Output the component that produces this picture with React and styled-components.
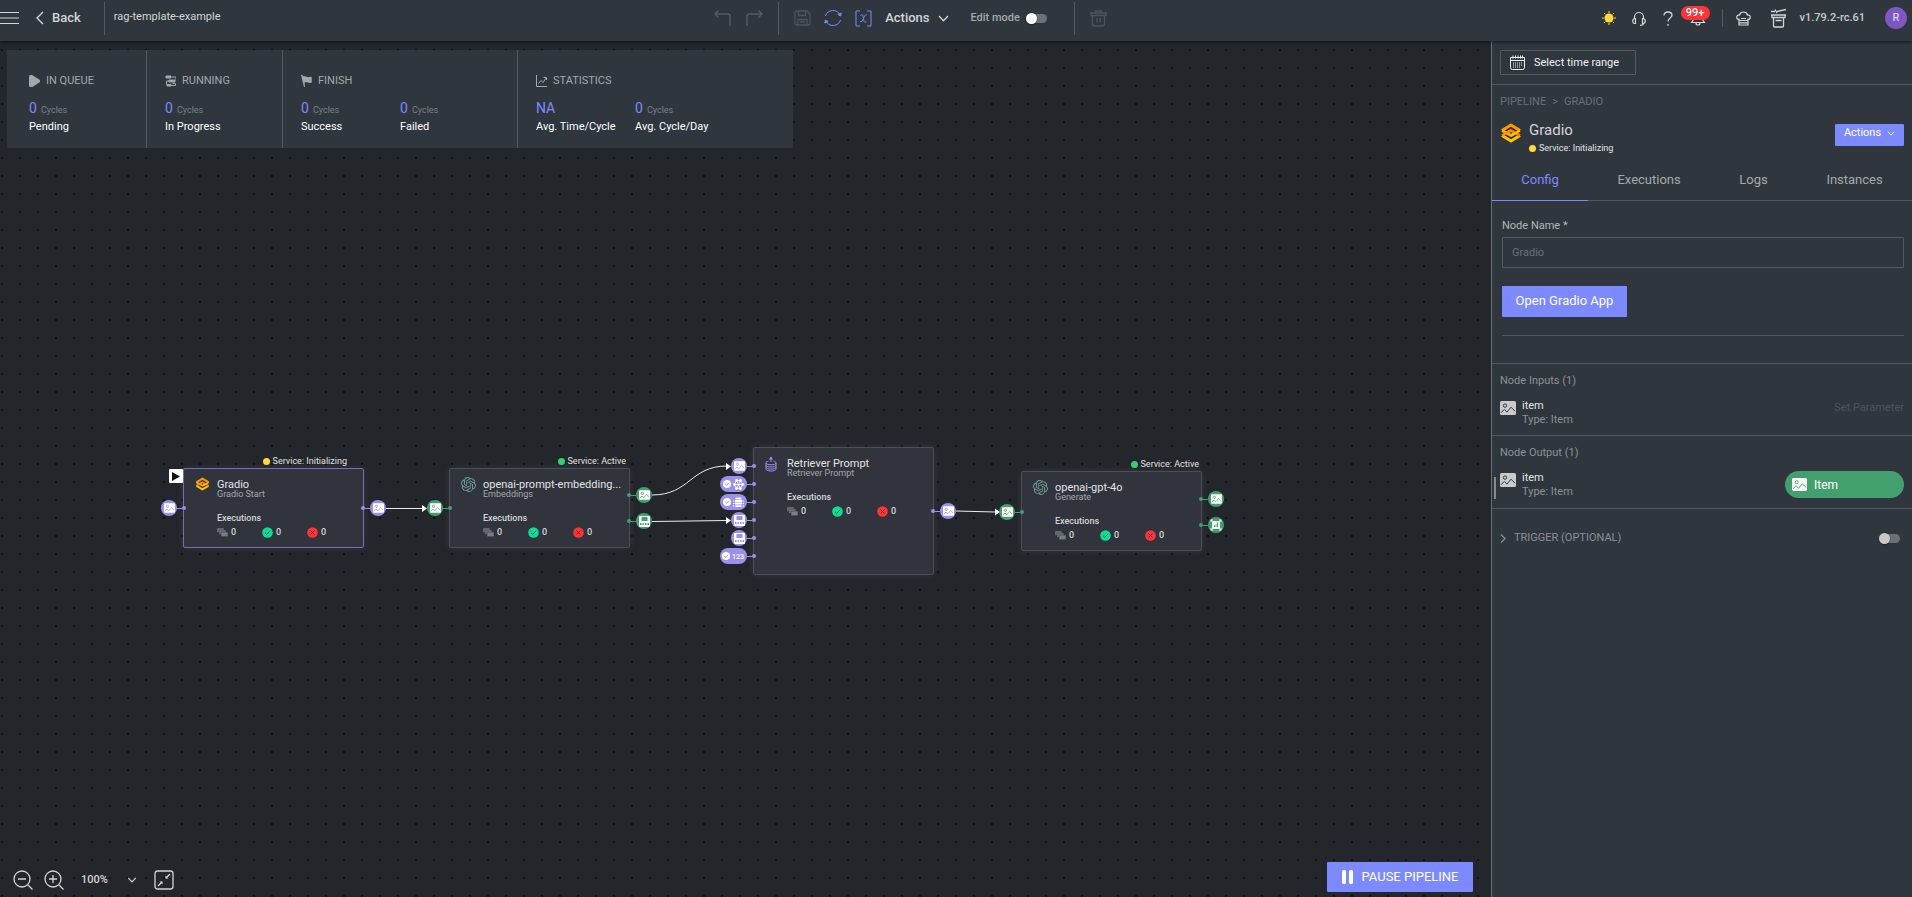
import React from "react";
import styled, { createGlobalStyle, css } from "styled-components";
import { SiOpenai } from "react-icons/si";

const c = {
  bar: "#30363e",
  canvas: "#23262b",
  line: "#555a62",
  text: "#d3d5d7",
  soft: "#a5a8ab",
  mute: "#8c9095",
  dim: "#6b7076",
  off: "#4e545c",
  accent: "#7d8aff",
  purple: "#9d8fec",
  green: "#43a06e",
};

const GlobalStyle = createGlobalStyle`
  * { box-sizing: border-box; }
  body {
    margin: 0;
    background: ${c.canvas};
    color: ${c.text};
    font-family: Roboto, "Liberation Sans", sans-serif;
    font-size: 11px;
    line-height: 14px;
  }
  h1, h2, h3, h4, p, dl, dd, dt, ul { margin: 0; padding: 0; font: inherit; list-style: none; }
  button, input, select { font: inherit; color: inherit; }
  svg { display: block; flex: none; }
`;

const Page = styled.div`
  display: flex;
  flex-direction: column;
  height: 100vh;
  overflow: hidden;
`;

/* ---------- header ---------- */
const Header = styled.header`
  position: relative;
  z-index: 2;
  display: flex;
  justify-content: space-between;
  flex: none;
  height: 41px;
  padding: 0 5px 5px 0;
  background: ${c.bar};
  box-shadow: 0 1px 3px rgba(0, 0, 0, 0.6);
`;

const Group = styled.div`
  display: flex;
  align-items: center;
  gap: ${(p) => p.$gap || 0}px;
  padding-left: ${(p) => p.$pad || 0}px;
`;

const Plain = styled.button`
  display: flex;
  align-items: center;
  gap: 8px;
  padding: 0;
  border: 0;
  background: none;
  color: ${(p) => p.$color || c.text};
  font-size: ${(p) => p.$size || 11}px;
  font-weight: ${(p) => (p.$light ? 400 : 500)};
  cursor: pointer;
`;

const VLine = styled.span`
  width: 1px;
  height: ${(p) => p.$h || 33}px;
  background: ${c.line};
`;

const PipelineName = styled.h1`
  font-size: 11px;
  font-weight: 400;
  padding-bottom: 2px;
`;

const SwitchLabel = styled.label`
  display: flex;
  align-items: center;
  gap: 6px;
  color: ${c.soft};
  font-weight: 500;
`;

const Switch = styled.input`
  appearance: none;
  display: flex;
  align-items: center;
  width: 20px;
  height: 9px;
  margin: 0 1px;
  border-radius: 5px;
  background: #6d7074;
  &::before {
    content: "";
    width: 11px;
    height: 11px;
    margin-left: -1px;
    flex: none;
    border-radius: 50%;
    background: ${(p) => p.$knob || "#fff"};
    box-shadow: 0 1px 2px rgba(0, 0, 0, 0.4);
  }
`;

const BellBox = styled.button`
  position: relative;
  padding: 0;
  border: 0;
  background: none;
  color: ${c.text};
`;

const Badge = styled.span`
  position: absolute;
  left: -9px;
  top: -4px;
  width: 29px;
  height: 14px;
  border-radius: 7px;
  background: #fb3437;
  color: #fff;
  font-weight: 500;
  line-height: 14px;
  text-align: center;
`;

const Version = styled.span`
  padding-bottom: 1px;
  font-weight: 500;
  color: #c9cbce;
`;

const Avatar = styled.button`
  width: 22px;
  height: 22px;
  padding: 0;
  border: 0;
  border-radius: 50%;
  background: #7e57c2;
  color: #d8cdec;
  font-weight: 500;
`;

/* ---------- workspace ---------- */
const Body = styled.div`
  display: flex;
  flex: 1;
  min-height: 0;
`;

const Canvas = styled.main`
  position: relative;
  display: flex;
  flex-direction: column;
  align-items: flex-start;
  flex: 1;
  min-width: 0;
  padding: 9px 7px 5px;
  background-color: ${c.canvas};
  background-image: conic-gradient(from 90deg at 16px 16px, #0f1113 90deg, transparent 0);
  background-size: 18px 18px;
  background-position: 3px 10px;
`;

const Stats = styled.section`
  display: flex;
  width: 786px;
  max-width: 100%;
  padding-left: 4px;
  background: ${c.bar};
`;

const StatBlock = styled.div`
  padding: 24px 18px 12px;
  & + & { border-left: 1px solid ${c.line}; }
`;

const StatTitle = styled.h2`
  display: flex;
  align-items: center;
  gap: 6px;
  color: ${c.soft};
  font-size: 11px;
`;

const StatList = styled.dl`
  display: flex;
  margin-top: 12px;
`;

const Stat = styled.div`
  display: flex;
  flex-direction: column-reverse;
  gap: 2px;
  width: 99px;
  dt { color: #fff; line-height: 18px; white-space: nowrap; }
  dd { height: 16px; color: ${c.accent}; font-size: 14px; line-height: 16px; }
  small { margin-left: 4px; color: #7b8085; font-size: 9px; line-height: 9px; }
`;

const Edges = styled.svg`
  position: absolute;
  left: 0;
  top: 0;
  width: 100%;
  height: 100%;
  pointer-events: none;
`;

const Node = styled.article`
  position: absolute;
  left: ${(p) => p.$x}px;
  top: ${(p) => p.$y}px;
  width: 181px;
  height: ${(p) => p.$h || 80}px;
  padding: 10px 4px 0 33px;
  border: 1px solid ${(p) => (p.$selected ? "#786bbd" : "#4c4e56")};
  border-radius: 2px;
  background: #31333d;
  box-shadow: 0 0 6px rgba(90, 92, 100, 0.35);
`;

const NodeIcon = styled.span`
  position: absolute;
  left: 11px;
  top: 8px;
`;

const NodeTitle = styled.h3`
  color: #e2e3e4;
  font-size: 11px;
  line-height: 11px;
  overflow: hidden;
  text-overflow: ellipsis;
  white-space: nowrap;
`;

const NodeType = styled.p`
  color: ${c.soft};
  font-size: 9px;
  line-height: 9px;
`;

const NodeLabel = styled.h4`
  margin-top: 13px;
  font-size: 9px;
  font-weight: 500;
  line-height: 12px;
`;

const Counts = styled.ul`
  display: flex;
  margin-top: 2px;
  li {
    display: flex;
    align-items: center;
    gap: 3px;
    width: 45px;
    font-size: 9px;
    font-weight: 500;
    line-height: 12px;
  }
`;

const Status = styled.p`
  display: flex;
  align-items: center;
  gap: 3px;
  color: #e2e3e4;
  font-size: 9px;
  line-height: 12px;
  white-space: nowrap;
  ${(p) =>
    p.$float &&
    css`
      position: absolute;
      right: ${p.$right}px;
      top: -14px;
    `}
  &::before {
    content: "";
    width: 7px;
    height: 7px;
    border-radius: 50%;
    background: ${(p) => (p.$active ? "#35cf74" : "#ffd83b")};
  }
`;

const PortRow = styled.span`
  position: absolute;
  display: flex;
  align-items: center;
  top: ${(p) => p.$y - 8}px;
  color: ${(p) => (p.$green ? c.green : c.purple)};
  ${(p) =>
    p.$out
      ? css`
          left: calc(100% - 2px);
          flex-direction: row-reverse;
        `
      : css`
          right: calc(100% - 2px);
        `}
`;

const PortBadge = styled.span`
  display: flex;
  align-items: center;
  justify-content: center;
  gap: 2px;
  width: ${(p) => (p.$wide ? 27 : 16)}px;
  height: 16px;
  border-radius: 8px;
  background: currentColor;
`;

const Stem = styled.span`
  width: 5px;
  height: 1px;
  background: currentColor;
`;

const Dot = styled.span`
  width: 4px;
  height: 4px;
  border-radius: 50%;
  background: currentColor;
`;

const StartFlag = styled.span`
  position: absolute;
  left: -15px;
  top: 0;
  display: flex;
  align-items: center;
  justify-content: center;
  width: 14px;
  height: 14px;
  border-radius: 1px;
  background: #fff;
`;

const Footer = styled.footer`
  display: flex;
  align-items: center;
  justify-content: space-between;
  width: 100%;
  margin-top: auto;
  padding: 0 11px 0 6px;
`;

const ZoomTools = styled.div`
  display: flex;
  align-items: center;
  gap: 17px;
  padding-top: 5px;
`;

const ZoomPick = styled.span`
  display: flex;
  align-items: center;
  width: 56px;
  select {
    width: 56px;
    margin: 0 -10px 0 0;
    padding: 0;
    border: 0;
    background: none;
    appearance: none;
    font-weight: 500;
  }
  svg { pointer-events: none; }
`;

const Solid = styled.button`
  display: flex;
  align-items: center;
  justify-content: center;
  gap: ${(p) => p.$gap || 9}px;
  width: ${(p) => p.$w}px;
  height: ${(p) => p.$h}px;
  padding: 0 0 ${(p) => p.$lift || 0}px;
  border: 0;
  border-radius: 1px;
  background: ${c.accent};
  color: #fff;
  font-size: ${(p) => p.$size || 13}px;
`;

/* ---------- side panel ---------- */
const Side = styled.aside`
  width: 421px;
  flex: none;
  border-left: 1px solid #6c7076;
  background: ${c.bar};
`;

const Section = styled.section`
  position: relative;
  height: ${(p) => p.$h}px;
  padding: ${(p) => p.$top || 0}px 8px 0;
  border-bottom: 1px solid ${c.line};
`;

const TimeButton = styled.button`
  display: flex;
  align-items: center;
  gap: 9px;
  width: 136px;
  height: 25px;
  padding: 0 9px;
  border: 1px solid ${c.line};
  border-radius: 1px;
  background: none;
  color: #f0f0f1;
`;

const Crumbs = styled.nav`
  display: flex;
  gap: 6px;
  padding: 10px 8px 0;
  color: ${c.dim};
  a { color: inherit; text-decoration: none; }
`;

const Identity = styled.div`
  display: flex;
  gap: 7px;
  padding: 12px 8px 0;
`;

const IdentityText = styled.div`
  flex: 1;
  h2 { font-size: 15px; line-height: 18px; margin-bottom: 3px; }
`;

const LogoBox = styled.span`
  padding-top: 2px;
`;

const ActionBox = styled.div`
  padding-top: 3px;
`;

const Tabs = styled.div`
  display: flex;
  margin-top: 10px;
  border-bottom: 1px solid ${c.line};
`;

const Tab = styled.button`
  flex: 1 1 auto;
  height: 37px;
  margin-bottom: -1px;
  padding: 0 0 4px;
  border: 0;
  border-bottom: 1px solid ${(p) => (p.$on ? c.accent : "transparent")};
  background: none;
  color: ${(p) => (p.$on ? c.accent : c.soft)};
  font-size: 13px;
`;

const Form = styled.section`
  padding: 18px 8px 27px 10px;
  border-bottom: 1px solid ${c.line};
  label { display: block; margin-bottom: 4px; color: #b4b6b9; }
  hr { margin: 18px 0 0; border: 0; border-top: 1px solid ${c.line}; }
`;

const Field = styled.input`
  display: block;
  width: 100%;
  height: 31px;
  margin-bottom: 18px;
  padding: 0 9px;
  border: 1px solid ${c.line};
  border-radius: 1px;
  background: none;
  color: ${c.dim};
`;

const IoTitle = styled.h3`
  color: ${c.mute};
  font-size: 11px;
`;

const IoRow = styled.div`
  display: flex;
  align-items: flex-start;
  gap: 6px;
  margin-top: 11px;
`;

const IoText = styled.div`
  flex: 1;
  p { color: #e2e3e4; }
  p + p { color: ${c.mute}; }
`;

const IoIcon = styled.span`
  padding-top: 2px;
  color: ${c.bar};
`;

const ParameterBox = styled.div`
  padding-top: 2px;
`;

const Chip = styled.span`
  display: flex;
  align-items: center;
  gap: 7px;
  width: 119px;
  height: 27px;
  padding-left: 7px;
  border-radius: 14px;
  background: ${c.green};
  color: #fff;
  font-size: 12px;
`;

const Grip = styled.span`
  position: absolute;
  left: 2px;
  top: 41px;
  width: 2px;
  height: 22px;
  background: #85898e;
`;

const TriggerRow = styled.div`
  display: flex;
  align-items: center;
  justify-content: space-between;
  padding: 22px 11px 14px 8px;
`;

/* ---------- icons ---------- */
const I = ({ w = 16, h = w, vb, sw = 1, children, ...rest }) => (
  <svg width={w} height={h} viewBox={vb || `0 0 ${w} ${h}`} fill="none" stroke="currentColor" strokeWidth={sw} {...rest}>
    {children}
  </svg>
);

const Chevron = ({ w = 11, h = 7, sw = 1.3 }) => (
  <I w={w} h={h} vb="0 0 11 7" sw={sw}><path d="M1 1l4.5 4.7L10 1" /></I>
);

const Picture = ({ w = 11, h = 10, fill = "#fff", line = "currentColor" }) => (
  <svg width={w} height={h} viewBox="0 0 16 14" fill="none" stroke={line} strokeWidth="1">
    <rect width="16" height="14" rx="1.5" fill={fill} stroke="none" />
    <circle cx="5" cy="4.6" r="1.7" />
    <path d="M1 11.5l3.4-3 2.6 2.6L11 6.2l4 4" />
  </svg>
);

const JsonIcon = () => (
  <svg width="11" height="11" viewBox="0 0 11 11">
    <rect width="11" height="11" rx="1" fill="#fff" />
    <path fill="currentColor" d="M2.5 1h6v4h-6zM1 7h1.5v2H1zM3.5 7h1.3v2H3.5zM6 7h1.5v2H6zM8.5 7H10v2H8.5z" />
  </svg>
);

const ScanIcon = () => (
  <svg width="12" height="12" viewBox="0 0 12 12">
    <path d="M1 3V1h2M9 1h2v2M11 9v2H9M3 11H1V9" fill="none" stroke="#fff" />
    <rect x="2" y="2" width="8" height="8" rx="1" fill="#fff" />
    <path d="M4.5 8V6.5M6 8V5.5M7.5 8V3.5" stroke="currentColor" />
  </svg>
);

const HexIcon = () => (
  <I w={11} stroke="#fff" sw={0.8}>
    <path d="M3.6 1.5h3.8L9.8 5.5 7.4 9.5H3.6L1.2 5.5zM3.6 1.5l3.8 8M7.4 1.5l-3.8 8M1.2 5.5h8.6" />
    <g fill="#fff" stroke="none">
      <circle cx="3.6" cy="1.5" r="1.4" /><circle cx="7.4" cy="1.5" r="1.4" /><circle cx="9.6" cy="5.5" r="1.4" />
      <circle cx="7.4" cy="9.5" r="1.4" /><circle cx="3.6" cy="9.5" r="1.4" /><circle cx="1.4" cy="5.5" r="1.4" />
    </g>
  </I>
);

const StackIcon = () => (
  <I w={11} stroke="#fff" sw={1.8}>
    <path d="M2.5 1.5h6M2 4h7M2 6.5h7M2.5 9.2h6" />
    <path d="M0 4h1.5M0 6.5h1.5M0 9h1.5M9.5 4H11M9.5 6.5H11M9.5 9H11" strokeWidth="1" />
  </I>
);

const NumberIcon = () => (
  <svg width="13" height="9" viewBox="0 0 13 9">
    <text x="0" y="7" fontSize="7" fontWeight="500" fill="#fff">123</text>
  </svg>
);

const Tick = () => (
  <svg width="8" height="8" viewBox="0 0 8 8">
    <circle cx="4" cy="4" r="4" fill="#fff" />
    <path d="M2.3 4.1l1.3 1.2 2.2-2.4" fill="none" stroke="currentColor" />
  </svg>
);

const Gradio = ({ w = 22, h = 20 }) => (
  <svg width={w} height={h} viewBox="0 0 22 20" fill="none" strokeWidth="3" strokeLinejoin="round">
    <path d="M2 7.5L11 2l9 5.5" stroke="#ff9a00" />
    <path d="M2 12.5L11 18l9-5.5" stroke="#ffc400" />
    <path d="M2 7.5l9 5 3.5-2" stroke="#ffb300" strokeWidth="2.6" />
    <path d="M20 12.5l-9-5-3.5 2" stroke="#ff7c00" strokeWidth="2.6" />
    <path d="M20 7.5L11 12.8" stroke="#ffc400" strokeWidth="2.2" />
    <path d="M2 12.5l9-5.3" stroke="#ff9500" strokeWidth="2.2" />
  </svg>
);

const Retriever = () => (
  <I w={12} h={16} stroke={c.purple}>
    <path d="M6 6V1.5M3.5 5.2C2 5.5 1 6 1 6.8v6.4c0 1 2.2 1.8 5 1.8s5-.8 5-1.8V6.8c0-.8-1-1.3-2.5-1.600M1 7c0 1 2.200 1.800 5 1.800S11 8 11 7M1 9.200C1 10.200 3.200 11 6 11s5-.8 5-1.800M1 11.300c0 1 2.200 1.800 5 1.800s5-.8 5-1.800" />
    <path d="M6 .5L8.200 3.500H3.800z" fill={c.purple} stroke="none" />
  </I>
);

const QueueIcon = () => (
  <svg width="11" height="9" viewBox="0 0 11 9" stroke="#31333d" strokeWidth=".6" fill="#7c7d82">
    <rect x="0" y="0" width="7" height="4.5" /><rect x="2" y="2" width="7" height="4.5" /><rect x="4" y="4" width="7" height="4.8" />
  </svg>
);

const DoneIcon = () => (
  <svg width="11" height="11" viewBox="0 0 11 11">
    <circle cx="5.5" cy="5.5" r="5.3" fill="#0bdc96" />
    <path d="M3 5.7l1.8 1.7 3.1-3.5" fill="none" stroke="#1d5c49" />
  </svg>
);

const FailIcon = () => (
  <svg width="11" height="11" viewBox="0 0 11 11">
    <circle cx="5.5" cy="5.5" r="5.3" fill="#fb3437" />
    <path d="M3.6 3.6l3.8 3.8M7.4 3.6L3.6 7.4" stroke="#7c1d22" />
  </svg>
);

/* ---------- composed parts ---------- */
const icons = { pic: <Picture />, json: <JsonIcon />, scan: <ScanIcon />, hex: <HexIcon />, stack: <StackIcon />, num: <NumberIcon /> };

const Port = ({ y, kind = "pic", green, out, tick }) => (
  <PortRow $y={y} $green={green} $out={out}>
    <PortBadge $wide={tick}>
      {tick && <Tick />}
      {icons[kind]}
    </PortBadge>
    <Stem />
    <Dot />
  </PortRow>
);

const nodes = [
  {
    x: 183, y: 427, title: "Gradio", type: "Gradio Start", selected: true, start: true,
    icon: <Gradio w={15} h={14} />, status: "Service: Initializing", right: 16,
    ports: [{ y: 39 }, { y: 39, out: true }],
  },
  {
    x: 449, y: 427, title: "openai-prompt-embedding...", type: "Embeddings",
    icon: <SiOpenai size={15} color="#6f9f96" />, status: "Service: Active", active: true, right: 3,
    ports: [{ y: 39, green: true }, { y: 26, green: true, out: true }, { y: 52, green: true, out: true, kind: "json" }],
  },
  {
    x: 753, y: 406, h: 128, title: "Retriever Prompt", type: "Retriever Prompt", icon: <Retriever />,
    ports: [
      { y: 18 }, { y: 36, tick: true, kind: "hex" }, { y: 54, tick: true, kind: "stack" },
      { y: 72, kind: "json" }, { y: 90, kind: "json" }, { y: 108, tick: true, kind: "num" },
      { y: 63, out: true },
    ],
  },
  {
    x: 1021, y: 430, title: "openai-gpt-4o", type: "Generate",
    icon: <SiOpenai size={15} color="#6f9f96" />, status: "Service: Active", active: true, right: 2,
    ports: [{ y: 40, green: true }, { y: 27, green: true, out: true }, { y: 53, green: true, out: true, kind: "scan" }],
  },
];

const stats = [
  { title: "IN QUEUE", icon: <I w={11} h={12} fill="currentColor" stroke="none"><path d="M0 1.5Q0 0 1.5 0H3l8 5v2l-7.5 5h-2Q0 12 0 10.500z" /></I>, items: [["0", "Pending"]] },
  { title: "RUNNING", icon: <I w={11} h={12}><path d="M1 1h5v2H1zM4 5h6v2H4zM2 9.5h4V11H2z" fill="currentColor" /><path d="M7 2h4v3M4 6H1.5v3.5M6 10.5h4.500v-2H7.500" /></I>, items: [["0", "In Progress"]] },
  { title: "FINISH", icon: <I w={11} h={12} fill="currentColor" stroke="none"><path d="M0 0h1.5l1 1.5C5 .5 6.5 3 9 1.8L10.7 2v5.5C8 9 6.5 6.5 3.5 7.500L4 12H3z" /></I>, items: [["0", "Success"], ["0", "Failed"]] },
  { title: "STATISTICS", icon: <I w={11} h={12}><path d="M.5 0v11.5H11M2.5 8.5L5 5.5l2 2L10 3M7.5 2.5h3V5" /></I>, items: [["NA", "Avg. Time/Cycle"], ["0", "Avg. Cycle/Day"]] },
];

function TopBar() {
  return (
    <Header>
      <Group $gap={9}>
        <Group $gap={17}>
          <Plain aria-label="Menu"><I w={19} h={14}><path d="M0 1.5h19M0 7h19M0 12.5h19" /></I></Plain>
          <Group $gap={23}>
            <Plain $size={13}><I w={8} h={14} sw={1.4}><path d="M7 1L1 7l6 6" /></I>Back</Plain>
            <VLine />
          </Group>
        </Group>
        <PipelineName>rag-template-example</PipelineName>
      </Group>

      <Group $gap={15}>
        <Plain aria-label="Undo" $color="#565b63"><I w={17} h={18} sw={1.4}><path d="M16 17V7.5Q16 5 13.5 5H1M4.5 1.5L1 5l3.5 3.5" /></I></Plain>
        <Plain aria-label="Redo" $color="#565b63"><I w={17} h={18} sw={1.4}><path d="M1 17V7.5Q1 5 3.5 5H16M12.5 1.5L16 5l-3.5 3.5" /></I></Plain>
        <VLine />
        <Group $gap={13}>
          <Plain aria-label="Save" $color={c.off}><I w={17} sw={1.3}><path d="M1 3q0-2 2-2h10l3 3v9q0 2-2 2H3q-2 0-2-2zM4.5 1v4.5h7V1M4 15V9.5h9V15M6 12h5" /></I></Plain>
          <Plain aria-label="Refresh" $color={c.accent}><I w={18} h={18}><path d="M1.5 7A7.8 7.8 0 0 1 16 6M16.5 11A7.8 7.8 0 0 1 2 12" sw={1} /><path d="M14 5.5l2.6 1.5.6-3zM4 12.5L1.4 11l-.6 3z" fill="currentColor" /></I></Plain>
          <Plain aria-label="Variables" $color={c.accent}>
            <I w={17} h={17}><path d="M5 1H1v15h4M12 1h4v15h-4M5.5 5.5C8 3.5 8 6 8.5 8.5s.5 5 3 3M11.8 5C10 4 9.5 6.5 8.5 8.5S6.5 12.5 5 11.8" /></I>
          </Plain>
          <Plain $size={13}>Actions<Chevron /></Plain>
        </Group>
        <Group $pad={7} $gap={26}>
          <SwitchLabel htmlFor="edit">Edit mode<Switch id="edit" type="checkbox" /></SwitchLabel>
          <VLine />
        </Group>
        <Plain aria-label="Delete" $color={c.off}><I w={17} h={17} sw={1.3}><path d="M5.5 3V1h6v2M1 3h15v2.5H1zM2.5 5.5V14q0 2 2 2h8q2 0 2-2V5.5M7 8v4.5M10 8v4.5" /></I></Plain>
      </Group>

      <Group $gap={13}>
        <Group $gap={15}>
          <Plain aria-label="Light theme" $color="#ffd83b">
            <I w={16}><circle cx="8" cy="8" r="4.5" fill="currentColor" stroke="none" /><path d="M8 1v2M8 13v2M1 8h2M13 8h2M3 3l1.3 1.3M11.7 11.7L13 13M3 13l1.3-1.3M11.7 4.3L13 3" /></I>
          </Plain>
          <Group $gap={17}>
            <Plain aria-label="Support"><I w={14} h={15} sw={1.2}><path d="M2.5 7.5V6a4.5 4.5 0 0 1 9 0v1.5M3.5 7.5v5C1.5 12.5.7 11.5.7 10s1-2.5 2.8-2.5zM10.5 7.5v5c2 0 2.8-1 2.8-2.5s-1-2.5-2.8-2.5zM11.5 12.5q0 1.8-3.5 1.8" /></I></Plain>
            <Plain aria-label="Help"><I w={10} h={15} sw={1.3}><path d="M1 4.5C1 2 2.8 1 5 1s4 1.2 4 3.3C9 7 5 7 5 10.5M5 13v1.7" /></I></Plain>
            <BellBox aria-label="Notifications">
              <I w={16} h={16} sw={1.2}><path d="M1.5 12.5h13L13 10.5V7A5 5 0 0 0 3 7v3.5zM6 13q0 2 2 2t2-2" /></I>
              <Badge>99+</Badge>
            </BellBox>
          </Group>
        </Group>
        <Group $pad={3} $gap={13}>
          <VLine $h={18} />
          <Plain aria-label="Chef"><I w={15} h={15} sw={1.2}><path d="M3 8.5C1.5 8.5.7 7.5.7 6.2S2 3.8 3.5 4C4 2 5.5 1 7.5 1s3.5 1 4 3c1.5-.2 2.8.9 2.8 2.2S13.5 8.5 12 8.5M3 7.5V14h9V7.5M3 9.5h9M3 11.8h9M5 7.5h5" /></I></Plain>
        </Group>
        <Group $pad={6} $gap={13}>
          <Plain aria-label="Marketplace"><I w={17} h={20} sw={1.3}><path d="M1 3.5h4M7 3.5L16 1.5M5 1.5l2 3.5M1 7h15M2 7v2.5h13V7M3.5 9.5V18q0 1 1 1h8q1 0 1-1V9.5M5.5 12.5h6" /></I></Plain>
          <Version>v1.79.2-rc.61</Version>
        </Group>
        <Group $pad={7}><Avatar>R</Avatar></Group>
      </Group>
    </Header>
  );
}

function FlowNode({ n }) {
  return (
    <Node $x={n.x} $y={n.y} $h={n.h} $selected={n.selected}>
      {n.start && <StartFlag><I w={8} h={9} fill="#111" stroke="none"><path d="M0 0l8 4.5L0 9z" /></I></StartFlag>}
      {n.status && <Status $float $right={n.right} $active={n.active}>{n.status}</Status>}
      <NodeIcon>{n.icon}</NodeIcon>
      <NodeTitle>{n.title}</NodeTitle>
      <NodeType>{n.type}</NodeType>
      <NodeLabel>Executions</NodeLabel>
      <Counts>
        <li><QueueIcon />0</li>
        <li><DoneIcon />0</li>
        <li><FailIcon />0</li>
      </Counts>
      {n.ports.map((p, i) => <Port key={i} {...p} />)}
    </Node>
  );
}

function Workspace() {
  return (
    <Canvas>
      <Stats>
        {stats.map((s) => (
          <StatBlock key={s.title}>
            <StatTitle>{s.icon}{s.title}</StatTitle>
            <StatList>
              {s.items.map(([v, label]) => (
                <Stat key={label}>
                  <dt>{label}</dt>
                  <dd>{v}{v !== "NA" && <small>Cycles</small>}</dd>
                </Stat>
              ))}
            </StatList>
          </StatBlock>
        ))}
      </Stats>

      <Edges fill="none" stroke="#eceded">
        <path d="M386 467.5H422M652 454C690 454 690 425 727 425M652 480.5L727 479.5M956 470L995 471" />
        <path fill="#fff" stroke="none" d="M422 464l5 3.5-5 3.5zM726 422l5 3.5-5 3.5zM726 476l5 3.5-5 3.5zM995 467.5l5 3.5-5 3.5z" />
      </Edges>
      {nodes.map((n) => <FlowNode key={n.x} n={n} />)}

      <Footer>
        <ZoomTools>
          <Group $gap={11}>
            <Plain aria-label="Zoom out"><I w={20} sw={1.3}><circle cx="9" cy="9" r="8" /><path d="M5 9h8M15 15l4.5 4.5" /></I></Plain>
            <Plain aria-label="Zoom in"><I w={20} sw={1.3}><circle cx="9" cy="9" r="8" /><path d="M5 9h8M9 5v8M15 15l4.5 4.5" /></I></Plain>
          </Group>
          <ZoomPick>
            <select aria-label="Zoom level" defaultValue="100%"><option>100%</option><option>50%</option></select>
            <Chevron w={10} h={6} />
          </ZoomPick>
          <Plain aria-label="Fit to screen"><I w={20} sw={1.3}><rect x="1" y="1" width="18" height="18" rx="2.5" /><path d="M4 16l4-4M16 4l-4 4" /><path d="M8.5 11.5v3l-3-3zM11.5 8.5v-3l3 3z" fill="currentColor" stroke="none" /></I></Plain>
        </ZoomTools>
        <Solid $w={146} $h={30}><I w={11} h={14} fill="#fff" stroke="none"><rect width="4" height="14" rx="1.5" /><rect x="7" width="4" height="14" rx="1.5" /></I>PAUSE PIPELINE</Solid>
      </Footer>
    </Canvas>
  );
}

function SidePanel() {
  return (
    <Side>
      <Section $h={44} $top={9}>
        <TimeButton>
          <I w={15} h={15}><path d="M.5 2.5h14v10q0 2-2 2h-10q-2 0-2-2zM.5 5.5h14M3 .5v3M5.5.5v3M8 .5v3M10.5.5v3M12.5.5v3" /><path d="M3 8h9M3 10h9M3 12h7" strokeDasharray="1 1" /></I>
          Select time range
        </TimeButton>
      </Section>
      <Crumbs><a href="#pipeline">PIPELINE</a><span>&gt;</span><a href="#gradio">GRADIO</a></Crumbs>
      <Identity>
        <LogoBox><Gradio /></LogoBox>
        <IdentityText><h2>Gradio</h2><Status>Service: Initializing</Status></IdentityText>
        <ActionBox><Solid $w={69} $h={22} $size={11} $lift={4} $gap={6}>Actions<Chevron w={8} h={5} /></Solid></ActionBox>
      </Identity>
      <Tabs role="tablist">
        {["Config", "Executions", "Logs", "Instances"].map((t, i) => <Tab key={t} role="tab" aria-selected={i === 0} $on={i === 0}>{t}</Tab>)}
      </Tabs>
      <Form>
        <label htmlFor="node-name">Node Name *</label>
        <Field id="node-name" defaultValue="Gradio" />
        <Solid $w={125} $h={31} $lift={2}>Open Gradio App</Solid>
        <hr />
      </Form>
      <Section $h={72} $top={10}>
        <IoTitle>Node Inputs (1)</IoTitle>
        <IoRow>
          <IoIcon><Picture w={16} h={14} fill="#c9cacb" /></IoIcon>
          <IoText><p>item</p><p>Type: Item</p></IoText>
          <ParameterBox><Plain $light $color={c.off}>Set Parameter</Plain></ParameterBox>
        </IoRow>
      </Section>
      <Section $h={73} $top={10}>
        <Grip />
        <IoTitle>Node Output (1)</IoTitle>
        <IoRow>
          <IoIcon><Picture w={16} h={14} fill="#c9cacb" /></IoIcon>
          <IoText><p>item</p><p>Type: Item</p></IoText>
          <Chip><Picture w={15} h={13} line={c.green} />Item</Chip>
        </IoRow>
      </Section>
      <TriggerRow>
        <Plain $light $color={c.mute}><I w={6} h={9} sw={1.3}><path d="M1 .5l4 4-4 4" /></I>TRIGGER (OPTIONAL)</Plain>
        <Switch type="checkbox" aria-label="Trigger" $knob="#c9c9c9" />
      </TriggerRow>
    </Side>
  );
}

export default function App() {
  return (
    <Page>
      <GlobalStyle />
      <TopBar />
      <Body>
        <Workspace />
        <SidePanel />
      </Body>
    </Page>
  );
}
